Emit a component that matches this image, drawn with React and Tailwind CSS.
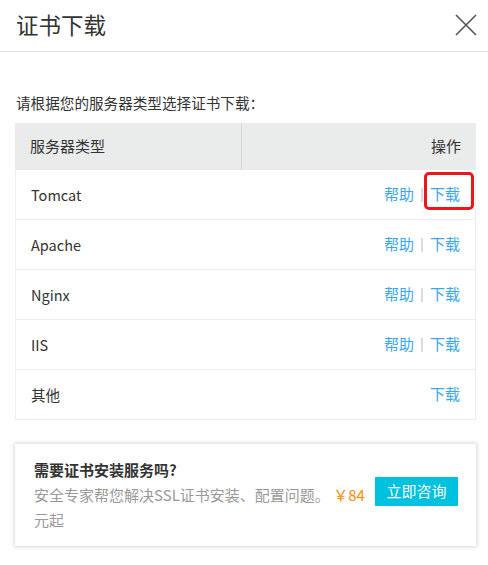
import React from 'react';

const rows = [
  { name: 'Tomcat', help: true, mark: true },
  { name: 'Apache', help: true },
  { name: 'Nginx', help: true },
  { name: 'IIS', help: true },
  { name: '其他', help: false },
];

const App = () => {
  return (
    <div className="w-[488px] h-[565px] bg-white text-[#333] font-['Noto_Sans_CJK_SC','Noto_Sans',sans-serif]">
      <div className="h-[52px] border-b border-[#e2e2e2] flex items-center justify-between pl-4 pr-[11px]">
        <h1 className="text-[22.5px] leading-none text-[#333] -mt-[2px]">证书下载</h1>
        <svg width="22" height="22" viewBox="0 0 22 22" className="-mt-[1px]">
          <path d="M1 1L21 21M21 1L1 21" stroke="#555" strokeWidth="1.6" fill="none" />
        </svg>
      </div>

      <div className="px-[15px]">
        <p className="mt-[41px] text-[14.6px] leading-5 pl-px text-[#333]">请根据您的服务器类型选择证书下载：</p>

        <div className="mt-[10px] w-[461px]">
          <div className="h-[47px] bg-[#eaecec] flex text-[15px] text-[#333]">
            <div className="w-[227px] border-r border-[#d6d8d8] flex items-center pl-[15px]">服务器类型</div>
            <div className="flex-1 flex items-center justify-end pr-[15px]">操作</div>
          </div>
          {rows.map((r) => (
            <div key={r.name} className="h-[50px] border-x border-b border-[#eeeeee] flex items-center justify-between pl-[15px] pr-[15px] text-[15px] relative">
              <span className="text-[#333] text-[14.5px]">{r.name}</span>
              <span className="flex items-center text-[#3ba7ee]">
                {r.help && (
                  <>
                    <span>帮助</span>
                    <span className="mx-[7px] w-[2px] h-[14px] bg-[#dcdcdc]"></span>
                  </>
                )}
                <span>下载</span>
              </span>
              {r.mark && (
                <div className="absolute left-[408px] top-[2px] w-[50px] h-[38px] border-[3px] border-[#f0141e] rounded-[5px]"></div>
              )}
            </div>
          ))}
        </div>

        <div className="mt-[24px] w-[461px] h-[102px] bg-white shadow-[0_0_4px_1px_rgba(0,0,0,0.16)] flex items-center pl-[19px] pr-[18px]">
          <div className="flex-1 text-[15px]">
            <div className="font-bold text-[#333] leading-[24px]">需要证书安装服务吗?</div>
            <div className="text-[#999] leading-[25px]">
              安全专家帮您解决SSL证书安装、配置问题。 <span className="text-[#ff8a00]">￥84</span> <span className="whitespace-nowrap">元起</span>
            </div>
          </div>
          <button className="ml-[6px] w-[83px] h-[29px] bg-[#00c1de] text-white text-[15px] mt-[-7px] shrink-0">立即咨询</button>
        </div>
      </div>
    </div>
  );
};

export default App;
